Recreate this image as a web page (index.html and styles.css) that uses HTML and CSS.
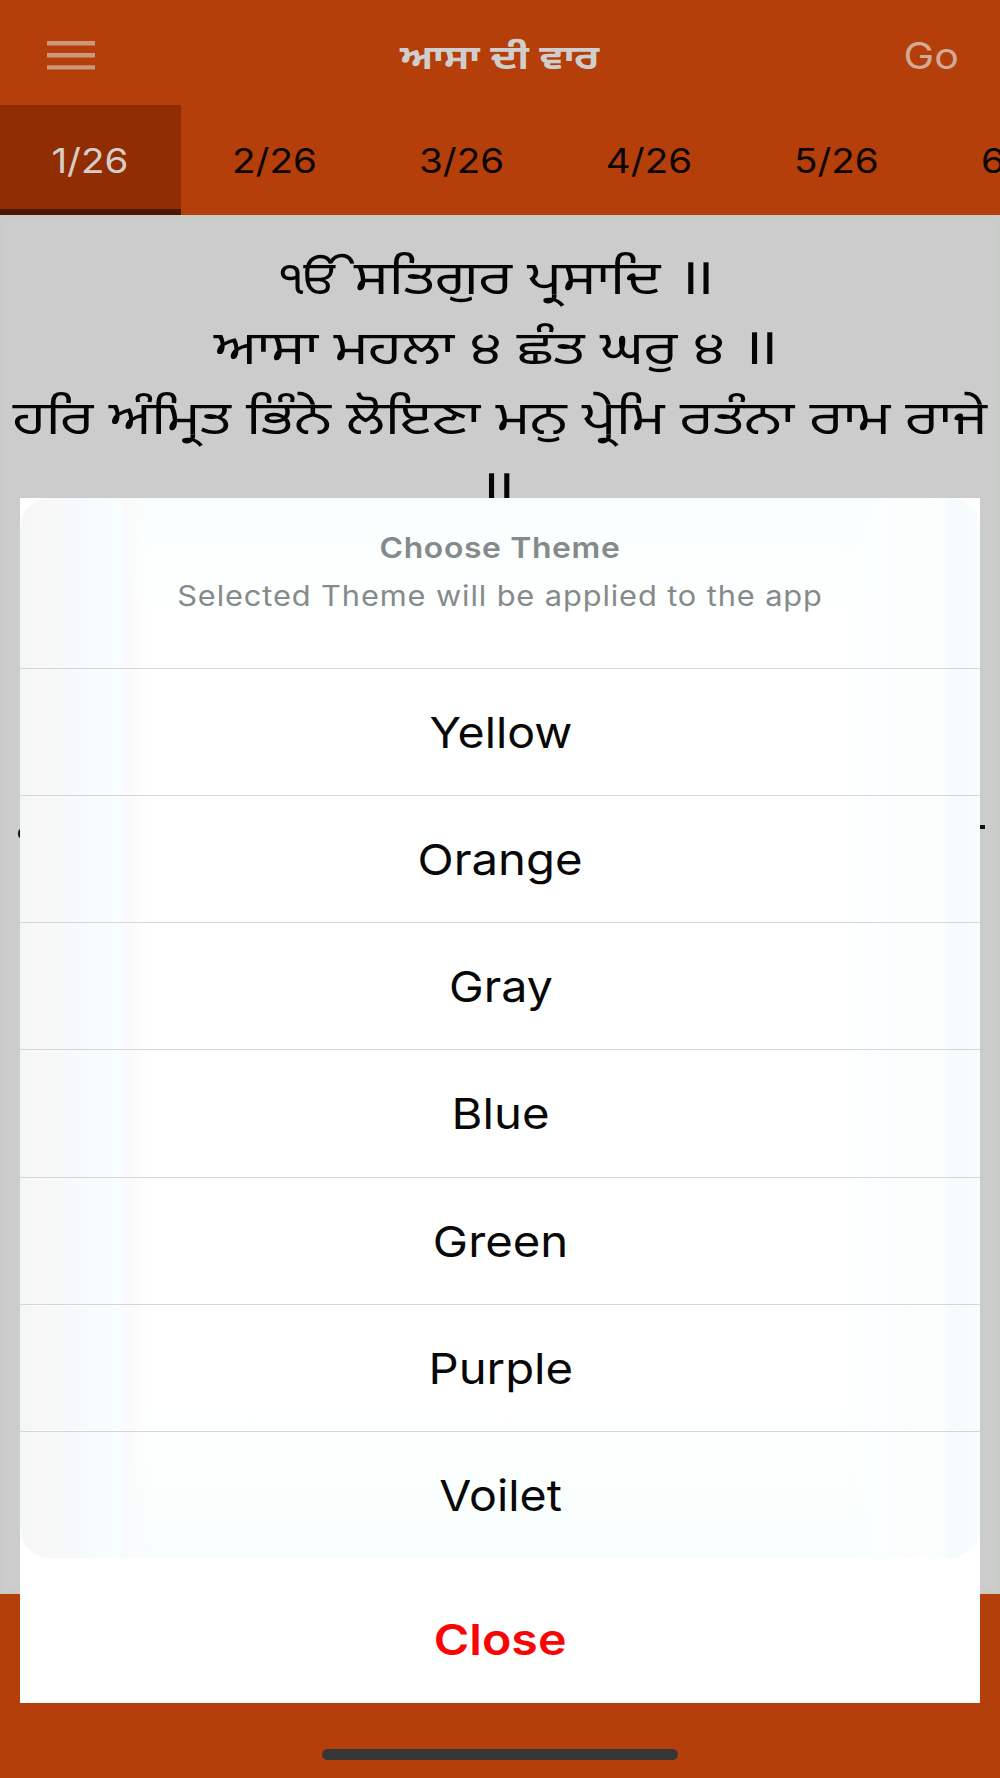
FILE: index.html
```
<!DOCTYPE html>
<html lang="pa">
<head>
<meta charset="utf-8">
<title>ਆਸਾ ਦੀ ਵਾਰ</title>
<link rel="stylesheet" href="styles.css">
</head>
<body>
<div class="screen">
  <header class="topbar">
    <svg class="menu-icon" viewBox="0 0 48 29" aria-hidden="true"><path d="M0 2.2h48M0 14.3h48M0 26.4h48"/></svg>
    <h1 class="title">ਆਸਾ ਦੀ ਵਾਰ</h1>
    <span class="go">Go</span>
  </header>
  <nav class="tabs">
    <span class="tab active"><b>1/26</b></span>
    <span class="tab"><b>2/26</b></span>
    <span class="tab"><b>3/26</b></span>
    <span class="tab"><b>4/26</b></span>
    <span class="tab"><b>5/26</b></span>
    <span class="tab"><b>6/26</b></span>
  </nav>
  <main class="scripture">
    <p class="line"><span class="onkar">ੴ</span> ਸਤਿਗੁਰ ਪ੍ਰਸਾਦਿ <span class="danda">।।</span></p>
    <p class="line">ਆਸਾ ਮਹਲਾ ੪ ਛੰਤ ਘਰੁ ੪ <span class="danda">।।</span></p>
    <p class="line full">ਹਰਿ ਅੰਮ੍ਰਿਤ ਭਿੰਨੇ ਲੋਇਣਾ ਮਨੁ ਪ੍ਰੇਮਿ ਰਤੰਨਾ ਰਾਮ ਰਾਜੇ</p>
    <p class="line"><span class="danda">।।</span></p>
    <i class="peek peek-left"></i>
    <i class="peek peek-right"></i>
  </main>
  <footer class="bottombar"><span class="home-indicator"></span></footer>

  <section class="sheet">
    <div class="options">
      <div class="sheet-head">
        <h2>Choose Theme</h2>
        <p>Selected Theme will be applied to the app</p>
      </div>
      <div class="option narrow"><span>Yellow</span></div>
      <div class="option"><span>Orange</span></div>
      <div class="option narrow"><span>Gray</span></div>
      <div class="option"><span>Blue</span></div>
      <div class="option"><span>Green</span></div>
      <div class="option"><span>Purple</span></div>
      <div class="option narrow"><span>Voilet</span></div>
    </div>
    <div class="close"><span>Close</span></div>
  </section>
</div>
</body>
</html>
```
FILE: styles.css
```
* { box-sizing: border-box; margin: 0; padding: 0; }
body { width: 1000px; height: 1778px; overflow: hidden; font-family: Inter, "Liberation Sans", sans-serif; }
.screen { position: relative; display: flex; flex-direction: column; width: 1000px; height: 1778px; overflow: hidden; background: #b53f0b; }

.topbar { display: grid; grid-template-columns: 1fr auto 1fr; align-items: center; height: 105px; padding: 5px 41px 0 47px; flex: none; }
.menu-icon { width: 48px; height: 29px; fill: none; stroke: #cd977c; stroke-width: 4.4; }
.title { font: 700 34px/50px "Noto Sans Gurmukhi", "Noto Sans", sans-serif; color: #d0cecd; transform: scaleX(1.19); margin-right: 7px; padding-top: 11px; }
.go { justify-self: end; font-size: 37px; color: #d3aa97; transform: scaleX(1.11); transform-origin: right; }

.tabs { display: flex; height: 110px; flex: none; overflow: hidden; }
.tab { display: flex; align-items: center; justify-content: center; flex: none; width: 187.3px; font-size: 34px; color: #0c0502; }
.tab b { font-weight: 400; transform: scaleX(1.135); }
.tab.active { width: 180.5px; background: #902d03; color: #d6cdca; border-bottom: 6px solid #4d1701; padding-top: 6px; }

.scripture { position: relative; height: 1379px; flex: none; background: #ccc; border: 5px solid #c9cbc6; border-bottom-width: 4px; padding-top: 28px; }
.line { height: 70.2px; line-height: 70.2px; padding-right: 13px; text-align: center; white-space: nowrap; font-family: "Noto Sans Gurmukhi", "Noto Sans", sans-serif; font-weight: 370; font-size: 47px; color: #050505; transform: scaleX(1.235); }
.line.full { padding-right: 0; transform: scaleX(1.22); }
.onkar { display: inline-block; margin-right: -20px; transform: scaleX(.86); transform-origin: left; }
.danda { font-size: 51px; line-height: 1; letter-spacing: -7px; }
.peek { position: absolute; background: #111; }
.peek-left { left: 13px; top: 609px; width: 6px; height: 9px; border-radius: 50%; }
.peek-right { left: 970px; top: 605px; width: 10px; height: 4px; }

.bottombar { flex: 1; display: flex; justify-content: center; align-items: flex-end; padding-bottom: 18px; }
.home-indicator { width: 356px; height: 11px; border-radius: 6px; background: #363636; }

.sheet { position: absolute; left: 20px; top: 497.5px; width: 960px; height: 1205px; background: #fff; }
.options {
  height: 1060.5px; border-radius: 30px; overflow: hidden;
  background:
    linear-gradient(90deg, #f5f7f7 0, #f8f8f8 28px, #f6fafb 60px, #f8ffff 96px, #fafafb 106px, rgba(255,255,255,0) 128px),
    linear-gradient(270deg, #f7fffe 0, #f5fafb 28px, #fafffe 40px, #fbfdfc 70px, #faffff 100px, rgba(255,255,255,0) 135px),
    linear-gradient(180deg, #f7fffe 0, #fff 130px, #fff 900px, #f7fefd 1060px);
}
.sheet-head { height: 170px; padding-top: 32px; text-align: center; color: #858a8a; }
.sheet-head h2 { font-size: 29px; line-height: 36px; font-weight: 600; letter-spacing: .57px; transform: scaleX(1.1); }
.sheet-head p { font-size: 28px; line-height: 34px; margin-top: 13px; letter-spacing: .8px; transform: scaleX(1.1); }
.option { display: flex; align-items: center; justify-content: center; height: 127.25px; border-top: 1.5px solid #d3d7d7; font-size: 43px; color: #080808; padding-left: 1px; }
.option span { transform: scaleX(1.1); }
.option.narrow span { transform: scaleX(1.082); }
.close { display: flex; align-items: center; justify-content: center; height: 127px; margin-top: 17.5px; font-size: 43px; font-weight: 600; color: #f90505; padding-left: 1px; }
.close span { transform: scaleX(1.124); }
```
